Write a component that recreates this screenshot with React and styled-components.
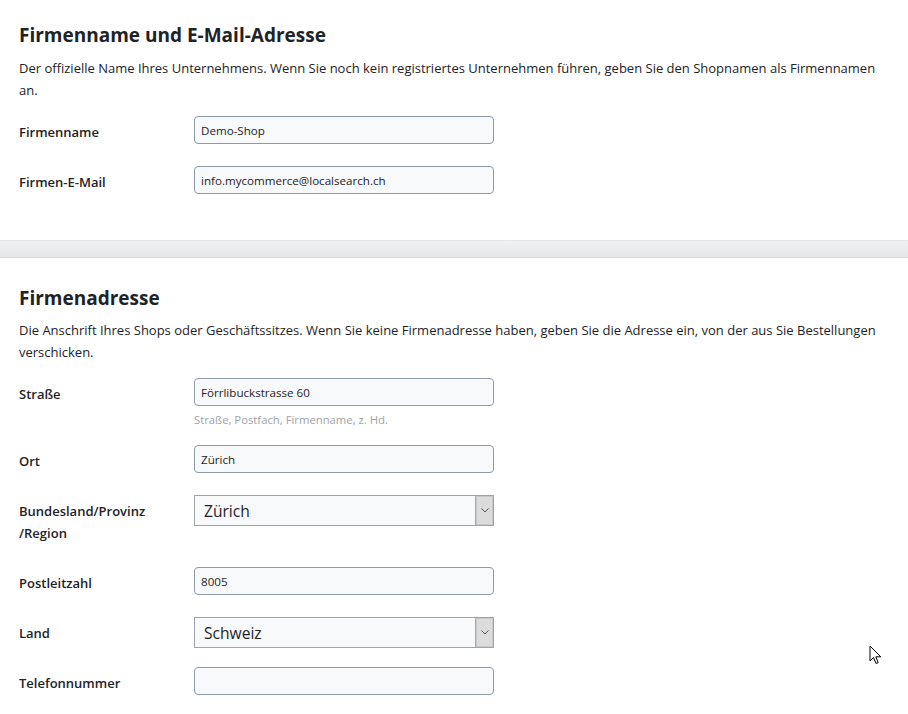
import React from 'react';
import styled, { createGlobalStyle } from 'styled-components';

const GlobalStyle = createGlobalStyle`
  html, body {
    margin: 0;
    padding: 0;
    background: #fff;
  }
  body {
    font-family: 'Open Sans', 'Noto Sans', sans-serif;
    color: #1d2327;
  }
`;

const Page = styled.div`
  position: relative;
  width: 908px;
  min-height: 714px;
  overflow: hidden;
`;

const Section = styled.section`
  padding: ${(p) => p.$top}px 20px ${(p) => p.$bottom}px 19px;
`;

const Title = styled.h2`
  margin: 0;
  font-size: 19px;
  line-height: 26px;
  font-weight: 700;
  color: #1d2327;
`;

const Desc = styled.p`
  margin: ${(p) => p.$mt}px 0 0;
  font-size: 13px;
  line-height: 22px;
  color: #1d2327;
`;

const Band = styled.div`
  height: 16px;
  background: linear-gradient(#f1f1f2, #e6e7e9);
  border-top: 1px solid #e4e6e9;
  border-bottom: 1px solid #d3d7dc;
`;

const Row = styled.div`
  display: grid;
  grid-template-columns: 175px 300px;
  align-items: start;
  margin-top: ${(p) => p.$mt}px;
`;

const Label = styled.label`
  padding-top: 5px;
  font-size: 13px;
  line-height: 22px;
  font-weight: 600;
  color: #1d2327;
`;

const Field = styled.div`
  display: flex;
  flex-direction: column;
`;

const Input = styled.input`
  box-sizing: border-box;
  width: 300px;
  height: 28px;
  padding: 0 6px;
  border: 1px solid #8f9aa8;
  border-radius: 4px;
  background: #f8f9fa;
  font-family: inherit;
  font-size: 11.6px;
  color: #1d2327;
  outline: none;
`;

const Hint = styled.div`
  margin-top: 6px;
  font-size: 11.3px;
  line-height: 16px;
  color: #9ea3a8;
`;

const SelectBox = styled.div`
  box-sizing: border-box;
  display: flex;
  width: 300px;
  height: ${(p) => p.$h}px;
  border: 1px solid #9ea4aa;
  background: #f8f9fa;
`;

const Select = styled.select`
  flex: 1;
  appearance: none;
  border: none;
  background: transparent;
  padding: 0 9px;
  font-family: inherit;
  font-size: 15.6px;
  color: #1d2327;
  outline: none;
`;

const Arrow = styled.span`
  box-sizing: border-box;
  width: 18px;
  display: flex;
  align-items: center;
  justify-content: center;
  background: #dcdcdc;
  border: 1px solid #a9a9a9;
  border-width: 0 0 0 1px;
  box-shadow: inset 0 0 0 1px #c9c9c9;
`;

const Cursor = styled.svg`
  position: absolute;
  left: 869px;
  top: 645px;
`;

const Chevron = () => (
  <svg width="8" height="5" viewBox="0 0 8 5">
    <path d="M0.5 0.5 L4 4 L7.5 0.5" fill="none" stroke="#555" strokeWidth="1" />
  </svg>
);

const Dropdown = ({ value, h }) => (
  <SelectBox $h={h}>
    <Select defaultValue={value}>
      <option>{value}</option>
    </Select>
    <Arrow>
      <Chevron />
    </Arrow>
  </SelectBox>
);

export default function App() {
  return (
    <Page>
      <GlobalStyle />
      <Section $top={22} $bottom={46}>
        <Title>Firmenname und E-Mail-Adresse</Title>
        <Desc $mt={9}>
          Der offizielle Name Ihres Unternehmens. Wenn Sie noch kein registriertes Unternehmen führen, geben Sie den
          Shopnamen als Firmennamen an.
        </Desc>
        <Row $mt={15}>
          <Label>Firmenname</Label>
          <Input defaultValue="Demo-Shop" />
        </Row>
        <Row $mt={22}>
          <Label>Firmen-E-Mail</Label>
          <Input defaultValue="info.mycommerce@localsearch.ch" />
        </Row>
      </Section>
      <Band />
      <Section $top={27} $bottom={20}>
        <Title>Firmenadresse</Title>
        <Desc $mt={8}>
          Die Anschrift Ihres Shops oder Geschäftssitzes. Wenn Sie keine Firmenadresse haben, geben Sie die Adresse ein,
          von der aus Sie Bestellungen verschicken.
        </Desc>
        <Row $mt={15}>
          <Label>Straße</Label>
          <Field>
            <Input defaultValue="Förrlibuckstrasse 60" />
            <Hint>Straße, Postfach, Firmenname, z. Hd.</Hint>
          </Field>
        </Row>
        <Row $mt={17}>
          <Label>Ort</Label>
          <Input defaultValue="Zürich" />
        </Row>
        <Row $mt={22}>
          <Label>
            Bundesland/Provinz
            <br />
            /Region
          </Label>
          <Dropdown value="Zürich" h={31} />
        </Row>
        <Row $mt={23}>
          <Label>Postleitzahl</Label>
          <Input defaultValue="8005" />
        </Row>
        <Row $mt={22}>
          <Label>Land</Label>
          <Dropdown value="Schweiz" h={31} />
        </Row>
        <Row $mt={19}>
          <Label>Telefonnummer</Label>
          <Input defaultValue="" />
        </Row>
      </Section>
      <Cursor width="14" height="22" viewBox="0 0 14 22">
        <path
          d="M1 1 L1 16 L4.5 12.5 L7 18.5 L9.2 17.6 L6.8 11.8 L11.8 11.8 Z"
          fill="#fff"
          stroke="#000"
          strokeWidth="1"
          strokeLinejoin="round"
        />
      </Cursor>
    </Page>
  );
}
